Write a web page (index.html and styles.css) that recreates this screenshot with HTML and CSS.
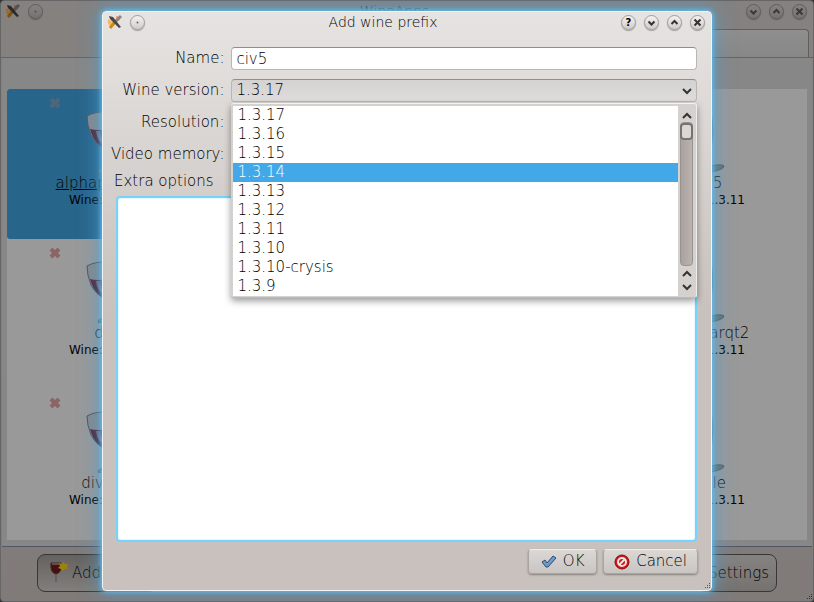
FILE: index.html
```html
<!DOCTYPE html>
<html lang="en">

<head>
    <meta charset="UTF-8">
    <meta name="viewport" content="width=device-width, initial-scale=1.0">
    <title>WineApps</title>
    <link rel="stylesheet" href="styles.css">
</head>

<body>

    <!-- shared icons -->
    <svg class="defs" aria-hidden="true">
        <defs>
            <linearGradient id="wine" x1="0" y1="0" x2="1" y2="1">
                <stop offset="0" stop-color="#9a3a5c"/>
                <stop offset="1" stop-color="#5c1438"/>
            </linearGradient>
            <symbol id="glass" viewBox="0 0 64 64">
                <path d="M12 7 Q20 2 36 3 Q40 24 35 42 Q22 38 16 26 Q12 16 12 7Z" fill="#dfe5ea" stroke="#7d8a96"/>
                <path d="M15 20 Q22 22 37 20 Q38 32 34 41 Q20 38 15 20Z" fill="url(#wine)"/>
                <path d="M21 22 L25 22 Q26 30 31 37 Q22 33 21 22Z" fill="#c3a6bd"/>
                <path d="M33 42 L35 59" stroke="#a9b4bb" stroke-width="2"/>
                <ellipse cx="36" cy="60" rx="13" ry="3" transform="rotate(-12 36 60)" fill="#a9bcbc" stroke="#8b9c9e"/>
            </symbol>
            <symbol id="app" viewBox="0 0 16 16">
                <path d="M1 5 Q0 11 4 12 L6 8Z" fill="#ffb35c"/>
                <path d="M9 2 Q14 2 13 6 L9 8Z" fill="#ff9a6a"/>
                <path d="M3 14 L8 8" stroke="#c98a14" stroke-width="3"/>
                <path d="M7 9 L14 2" stroke="#888" stroke-width="3"/>
                <path d="M2 2 L6 3 L14 13 L12 14 L3 5Z" fill="#484848"/>
            </symbol>
            <symbol id="cross" viewBox="0 0 12 12">
                <path d="M2 2 L10 10 M10 2 L2 10" stroke="#e8a8a8" stroke-width="4"/>
            </symbol>
            <symbol id="dot" viewBox="0 0 15 15"><circle cx="7.5" cy="7.5" r="1" fill="#666"/></symbol>
            <symbol id="down" viewBox="0 0 15 15"><path d="M4.5 6.5 L7.5 9.5 L10.5 6.5" class="stroke"/></symbol>
            <symbol id="up" viewBox="0 0 15 15"><path d="M4.5 9 L7.5 6 L10.5 9" class="stroke"/></symbol>
            <symbol id="close" viewBox="0 0 15 15"><path d="M4.5 4.5 L10.5 10.5 M10.5 4.5 L4.5 10.5" class="stroke"/></symbol>
            <symbol id="arrow-down" viewBox="0 0 10 7"><path d="M1 1 L5 5 L9 1" class="stroke"/></symbol>
            <symbol id="arrow-up" viewBox="0 0 10 7"><path d="M1 6 L5 2 L9 6" class="stroke"/></symbol>
            <symbol id="grip" viewBox="0 0 8 8">
                <path d="M6 1h1v1h-1z M4 3h1v1h-1z M6 3h1v1h-1z M2 5h1v1h-1z M4 5h1v1h-1z M6 5h1v1h-1z" fill="#555"/>
            </symbol>
        </defs>
    </svg>

    <main class="window">
        <header class="titlebar">
            <svg class="app-icon"><use href="#app"/></svg>
            <button class="round" aria-label="On all desktops"><svg><use href="#dot"/></svg></button>
            <h1>WineApps</h1>
            <button class="round" aria-label="Minimize"><svg><use href="#down"/></svg></button>
            <button class="round" aria-label="Maximize"><svg><use href="#up"/></svg></button>
            <button class="round" aria-label="Close"><svg><use href="#close"/></svg></button>
        </header>
        <div class="tabs"><div class="tab"></div></div>
        <section class="pane">
            <ul class="prefixes">
                <li class="prefix selected"><button class="remove" aria-label="Remove"><svg><use href="#cross"/></svg></button><svg class="glass"><use href="#glass"/></svg><a href="#">alphaprotocol</a><small>Wine: 1.3.11</small></li>
                <li class="prefix"></li>
                <li class="prefix"></li>
                <li class="prefix"><svg class="glass"><use href="#glass"/></svg><a href="#">civ5</a><small>Wine: 1.3.11</small></li>
                <li class="prefix"><button class="remove" aria-label="Remove"><svg><use href="#cross"/></svg></button><svg class="glass"><use href="#glass"/></svg><a href="#">dirt</a><small>Wine: 1.3.11</small></li>
                <li class="prefix"></li>
                <li class="prefix"></li>
                <li class="prefix"><svg class="glass"><use href="#glass"/></svg><a href="#">mysolarqt2</a><small>Wine: 1.3.11</small></li>
                <li class="prefix"><button class="remove" aria-label="Remove"><svg><use href="#cross"/></svg></button><svg class="glass"><use href="#glass"/></svg><a href="#">diviner</a><small>Wine: 1.3.11</small></li>
                <li class="prefix"></li>
                <li class="prefix"></li>
                <li class="prefix"><svg class="glass"><use href="#glass"/></svg><a href="#">table</a><small>Wine: 1.3.11</small></li>
            </ul>
        </section>
        <footer class="toolbar">
            <button class="tool">
                <svg class="tool-icon" viewBox="0 0 22 24">
                    <path d="M3 2 L13 2 Q14 12 8 13 Q2 12 3 2Z" fill="#7c1c1c" stroke="#5e4444"/>
                    <path d="M4 3 H12" stroke="#ddd"/>
                    <path d="M8 13 V21" stroke="#888"/>
                    <path d="M4 22 H13" stroke="#ccc" stroke-width="2"/>
                    <path d="M15 1 L17 3 L20 3 L19 6 L20 8 L17 8 L15 10 L13 8 L10 7 L12 5 L11 2 L14 3Z" fill="#ffdc1e"/>
                </svg>
                Add prefix
            </button>
            <button class="tool">Settings</button>
        </footer>
        <svg class="grip"><use href="#grip"/></svg>
    </main>

    <div class="overlay">
        <form class="dialog" role="dialog" aria-labelledby="dialog-title">
            <header class="titlebar">
                <svg class="app-icon"><use href="#app"/></svg>
                <button type="button" class="round" aria-label="On all desktops"><svg><use href="#dot"/></svg></button>
                <h2 id="dialog-title">Add wine prefix</h2>
                <button type="button" class="round help" aria-label="Help">?</button>
                <button type="button" class="round" aria-label="Minimize"><svg><use href="#down"/></svg></button>
                <button type="button" class="round" aria-label="Maximize"><svg><use href="#up"/></svg></button>
                <button type="button" class="round" aria-label="Close"><svg><use href="#close"/></svg></button>
            </header>

            <div class="fields">
                <label for="name">Name:</label>
                <input id="name" type="text" value="civ5">

                <label for="version">Wine version:</label>
                <div class="combo">
                    <select id="version"><option>1.3.17</option></select>
                    <svg class="arrow"><use href="#arrow-down"/></svg>
                    <div class="popup">
                        <ul class="options" role="listbox" aria-label="Wine version">
                            <li role="option">1.3.17</li>
                            <li role="option">1.3.16</li>
                            <li role="option">1.3.15</li>
                            <li role="option" class="current" aria-selected="true">1.3.14</li>
                            <li role="option">1.3.13</li>
                            <li role="option">1.3.12</li>
                            <li role="option">1.3.11</li>
                            <li role="option">1.3.10</li>
                            <li role="option">1.3.10-crysis</li>
                            <li role="option">1.3.9</li>
                        </ul>
                        <div class="scrollbar">
                            <button type="button" aria-label="Scroll up"><svg><use href="#arrow-up"/></svg></button>
                            <div class="track"><div class="thumb"></div></div>
                            <button type="button" aria-label="Scroll up"><svg><use href="#arrow-up"/></svg></button>
                            <button type="button" aria-label="Scroll down"><svg><use href="#arrow-down"/></svg></button>
                        </div>
                    </div>
                </div>

                <label for="resolution">Resolution:</label>
                <select id="resolution"></select>

                <label for="memory">Video memory:</label>
                <select id="memory"></select>
            </div>

            <label class="extra-label" for="extra">Extra options</label>
            <textarea id="extra"></textarea>

            <div class="actions">
                <button type="submit" class="push">
                    <svg viewBox="0 0 16 16"><path d="M1 8 L4 6 L6 9 L12 2 L15 4 L7 13 L5 13Z" fill="#6f9bc8" stroke="#2c4a70"/></svg>
                    OK
                </button>
                <button type="button" class="push">
                    <svg viewBox="0 0 16 16">
                        <circle cx="8" cy="8" r="7" fill="#d01818" stroke="#8c0c0c"/>
                        <circle cx="8" cy="8" r="4" fill="none" stroke="#f4e4e4" stroke-width="2"/>
                        <path d="M5 11 L11 5" stroke="#f4e4e4" stroke-width="2"/>
                    </svg>
                    Cancel
                </button>
            </div>
            <svg class="grip"><use href="#grip"/></svg>
        </form>
    </div>

</body>

</html>
```

FILE: styles.css
```css
* {
    padding: 0;
    margin: 0;
    box-sizing: border-box;
    list-style: none;
}

body {
    height: 100vh;
    overflow: hidden;
    background-color: #555;
    color: #000;
    font: 200 15px/19px "DejaVu Sans", sans-serif;
}

button,
input,
select,
textarea {
    font: inherit;
    color: inherit;
}

.defs {
    position: absolute;
    width: 0;
    height: 0;
}

.stroke {
    fill: none;
    stroke: #333;
    stroke-width: 2;
}

/* title bars */
.titlebar {
    display: flex;
    align-items: center;
    gap: 8px;
    height: 20px;
    padding: 0 6px 0 4px;
}

.titlebar h1,
.titlebar h2 {
    flex: 1;
    font-size: 14px;
    line-height: 20px;
    font-weight: 200;
    text-align: center;
}

.titlebar h1 {
    color: #555;
}

.app-icon {
    width: 16px;
    height: 16px;
    margin-right: -1px;
}

.round {
    width: 15px;
    height: 15px;
    border: 1px solid #a09c98;
    border-radius: 50%;
    background: linear-gradient(#f4f3f2, #cfccc9);
    box-shadow: 0 1px 1px #a09c98;
}

.window .round {
    background: linear-gradient(#dedad8, #c4bfbc);
}

.window .round svg {
    opacity: 0.7;
}

.round svg {
    display: block;
    width: 15px;
    height: 15px;
    margin: -1px;
}

.help {
    font-size: 10px;
    line-height: 13px;
    font-weight: bold;
}

/* main window */
.window {
    display: flex;
    flex-direction: column;
    height: 100%;
    border: 1px solid #aaa;
    border-radius: 4px;
    background: linear-gradient(#ddd8d5, #d6ceca);
    position: relative;
}

.tabs {
    display: flex;
    justify-content: flex-end;
    height: 37px;
    padding: 8px 4px 0 1px;
    border-bottom: 1px solid #a6a6b0;
}

.tab {
    width: 50%;
    border: 1px solid #a09c9a;
    border-bottom: 0;
    border-radius: 0 4px 0 0;
    background: linear-gradient(#efedec, #e2e2e2);
}

.pane {
    flex: 1;
    padding: 31px 5px 6px;
    margin: 0 1px;
    background-color: #e1e1e1;
    border-bottom: 1px solid #888fa8;
    overflow: hidden;
}

.prefixes {
    display: grid;
    grid-template-columns: repeat(4, 1fr);
    grid-auto-rows: 150px;
    height: 100%;
    background-color: #fff;
}

.prefix {
    display: flex;
    flex-direction: column;
    align-items: center;
    justify-content: flex-end;
    padding-bottom: 32px;
    border-radius: 3px;
}

.prefix a {
    color: #000;
    line-height: 20px;
    text-decoration: none;
}

.prefix small {
    font-size: 12px;
    line-height: 14px;
    font-weight: 400;
}

.selected {
    background-color: #43a8e8;
}

.selected a {
    text-decoration: underline;
}

.glass {
    width: 64px;
    height: 64px;
}

.remove {
    width: 12px;
    height: 12px;
    margin-left: 42px;
    align-self: flex-start;
    border: 0;
    background: none;
}

.remove svg {
    display: block;
    width: 12px;
    height: 12px;
}

.selected .remove {
    opacity: 0.4;
}

.toolbar {
    display: flex;
    justify-content: space-between;
    height: 54px;
    padding: 7px 36px 9px;
}

.tool {
    display: flex;
    align-items: center;
    gap: 2px;
    padding: 0 7px 0 10px;
    border: 1px solid #5c5c5c;
    border-radius: 8px;
    background: linear-gradient(#a8a29e, #d8d3cf);
}

.tool:last-child {
    background: linear-gradient(#dedad7, #c4beba);
}

.tool-icon {
    width: 22px;
    height: 24px;
}

.grip {
    position: absolute;
    right: 0;
    bottom: 0;
    width: 8px;
    height: 8px;
}

/* dialog over the dimmed window */
.overlay {
    position: absolute;
    inset: 0;
    display: flex;
    padding: 11px 102px;
    background-color: rgba(0, 0, 0, 0.4);
}

.dialog {
    flex: 1;
    display: flex;
    flex-direction: column;
    position: relative;
    border: 1px solid #f2f4f6;
    border-radius: 4px;
    background: linear-gradient(#e6e4e2, #c8c1bd 300px);
    box-shadow: 0 0 5px 1px #5ec0f4, 0 0 20px 3px rgba(80, 160, 210, 0.7);
}

.fields {
    display: grid;
    grid-template-columns: max-content 1fr;
    grid-auto-rows: 23px;
    gap: 9px 7px;
    align-items: center;
    padding: 15px 14px 0 8px;
}

.fields label {
    text-align: right;
}

.fields input,
.fields select {
    display: block;
    width: 100%;
    height: 23px;
    padding: 0 4px;
    border: 1px solid #bbb6b3;
    border-top-color: #918d8a;
    border-radius: 4px;
    background: linear-gradient(#d5d3d1, #dedcda);
    appearance: none;
}

.fields input {
    background: #fff;
}

.combo {
    position: relative;
}

.arrow {
    position: absolute;
    right: 5px;
    top: 9px;
    width: 10px;
    height: 7px;
}

.popup {
    position: absolute;
    z-index: 1;
    top: 24px;
    left: 0;
    right: 0;
    display: flex;
    padding: 2px 1px 1px 2px;
    border: 1px solid #f4f2f1;
    border-color: #f4f2f1 #eee #bbb #c8c4c1;
    border-width: 1px 1px 1px 0;
    border-radius: 3px;
    background-color: #d5d1ce;
    box-shadow: 0 3px 7px rgba(0, 0, 0, 0.4);
}

.options {
    flex: 1;
    background-color: #fff;
}

.options li {
    padding-left: 4px;
    line-height: 19px;
}

.options .current {
    background-color: #43a8e8;
    color: #fff;
}

.scrollbar {
    display: flex;
    flex-direction: column;
    width: 17px;
    padding: 2px;
}

.scrollbar button {
    display: grid;
    place-items: center;
    height: 14px;
    border: 0;
    background: none;
}

.scrollbar svg {
    width: 10px;
    height: 7px;
}

.track {
    flex: 1;
    border: 1px solid #989390;
    border-radius: 4px;
    background: linear-gradient(to right, #a9a19d, #bbb3af);
}

.thumb {
    height: 17px;
    border: 2px solid #77736f;
    border-radius: 4px;
    background-color: #dad7d4;
    margin: 0 -1px;
}

.extra-label {
    margin: 6px 11px 5px;
}

textarea {
    flex: 1;
    margin: 0 14px 0 13px;
    border: 2px solid #76d4fc;
    border-radius: 4px;
    background-color: #fff;
    box-shadow: inset 0 0 2px #a8e4ff;
    resize: none;
}

.actions {
    display: flex;
    justify-content: flex-end;
    gap: 6px;
    padding: 7px 13px 16px;
}

.push {
    display: flex;
    align-items: center;
    justify-content: center;
    gap: 6px;
    min-width: 69px;
    height: 25px;
    padding: 0 10px;
    border: 1px solid #aaa5a1;
    border-top-color: #eee;
    border-radius: 4px;
    background: linear-gradient(#dad7d5, #c9c5c2);
    box-shadow: 0 1px 2px #87817d;
}

.push svg {
    width: 16px;
    height: 16px;
}
```
